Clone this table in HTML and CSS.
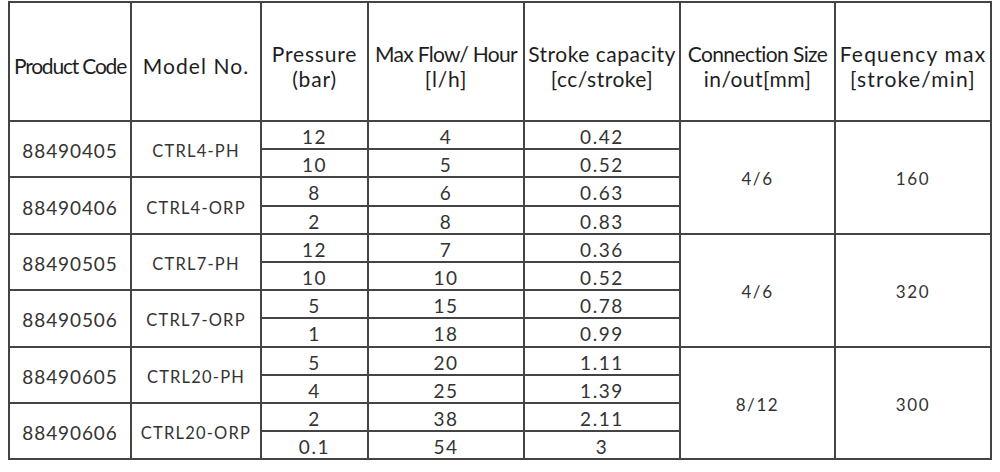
FILE: index.html
```html
<!DOCTYPE html>
<html>
<head>
<meta charset="utf-8">
<link rel="stylesheet" href="styles.css">
</head>
<body>
<table class="spec">
  <colgroup>
    <col class="c1"><col class="c2"><col class="c3"><col class="c4"><col class="c5"><col class="c6"><col class="c7">
  </colgroup>
  <thead>
    <tr class="head">
      <th><span class="h-code">Product Code</span></th>
      <th><span class="h-model">Model No.</span></th>
      <th><span class="h-press">Pressure<br>(bar)</span></th>
      <th><span class="h-flow">Max Flow/ Hour</span><br><span class="h-press">[l/h]</span></th>
      <th><span class="h-stroke">Stroke capacity<br>[cc/stroke]</span></th>
      <th><span class="h-conn">Connection Size</span><br><span class="h-stroke">in/out[mm]</span></th>
      <th><span class="h-freq">Fequency max<br>[stroke/min]</span></th>
    </tr>
  </thead>
  <tbody>
    <tr><td rowspan="2" class="code">88490405</td><td rowspan="2" class="model">CTRL4-PH</td><td>12</td><td>4</td><td>0.42</td><td rowspan="4" class="merge">4/6</td><td rowspan="4" class="merge">160</td></tr>
    <tr><td>10</td><td>5</td><td>0.52</td></tr>
    <tr><td rowspan="2" class="code">88490406</td><td rowspan="2" class="model">CTRL4-ORP</td><td>8</td><td>6</td><td>0.63</td></tr>
    <tr><td>2</td><td>8</td><td>0.83</td></tr>
    <tr><td rowspan="2" class="code">88490505</td><td rowspan="2" class="model">CTRL7-PH</td><td>12</td><td>7</td><td>0.36</td><td rowspan="4" class="merge">4/6</td><td rowspan="4" class="merge">320</td></tr>
    <tr><td>10</td><td>10</td><td>0.52</td></tr>
    <tr><td rowspan="2" class="code">88490506</td><td rowspan="2" class="model">CTRL7-ORP</td><td>5</td><td>15</td><td>0.78</td></tr>
    <tr><td>1</td><td>18</td><td>0.99</td></tr>
    <tr><td rowspan="2" class="code">88490605</td><td rowspan="2" class="model">CTRL20-PH</td><td>5</td><td>20</td><td>1.11</td><td rowspan="4" class="merge">8/12</td><td rowspan="4" class="merge">300</td></tr>
    <tr><td>4</td><td>25</td><td>1.39</td></tr>
    <tr><td rowspan="2" class="code">88490606</td><td rowspan="2" class="model">CTRL20-ORP</td><td>2</td><td>38</td><td>2.11</td></tr>
    <tr><td>0.1</td><td>54</td><td>3</td></tr>
  </tbody>
</table>
</body>
</html>
```
FILE: styles.css
```css
html, body {
  margin: 0;
  padding: 0;
  background: #ffffff;
}
body {
  font-family: "Lato", "DejaVu Sans", sans-serif;
  color: #2a2a2a;
}
.spec {
  margin: 1px 0 0 8px;
  border-collapse: collapse;
  table-layout: fixed;
  width: 984px;
  border: 2px solid #555;
}
.c1 { width: 122px; }
.c2 { width: 130px; }
.c3 { width: 107px; }
.c4 { width: 156px; }
.c5 { width: 156px; }
.c6 { width: 155px; }
.c7 { width: 156px; }

.spec th, .spec td {
  border: 2px solid #444;
  padding: 0;
  text-align: center;
  vertical-align: middle;
  white-space: nowrap;
  overflow: hidden;
}
.head th {
  height: 109px;
  padding-top: 8px;
  font-weight: 400;
  font-size: 21px;
  line-height: 25px;
  color: #1e1e1e;
}
.h-code { letter-spacing: -1.2px; }
.h-model { letter-spacing: 1.1px; }
.h-press { letter-spacing: 0.8px; }
.h-flow { letter-spacing: -0.7px; }
.h-stroke { letter-spacing: 0.5px; }
.h-conn { letter-spacing: -0.6px; }
.h-freq { letter-spacing: 1.2px; }

.spec td {
  height: 22.2px;
  padding-top: 4px;
  font-size: 19px;
  line-height: 22px;
  letter-spacing: 1.6px;
  color: #333;
}
.spec td.code { font-size: 19px; letter-spacing: 0.9px; }
.spec td.model { font-size: 16.5px; letter-spacing: 1.2px; }
.spec td.merge { font-size: 17px; letter-spacing: 1.6px; }
```
